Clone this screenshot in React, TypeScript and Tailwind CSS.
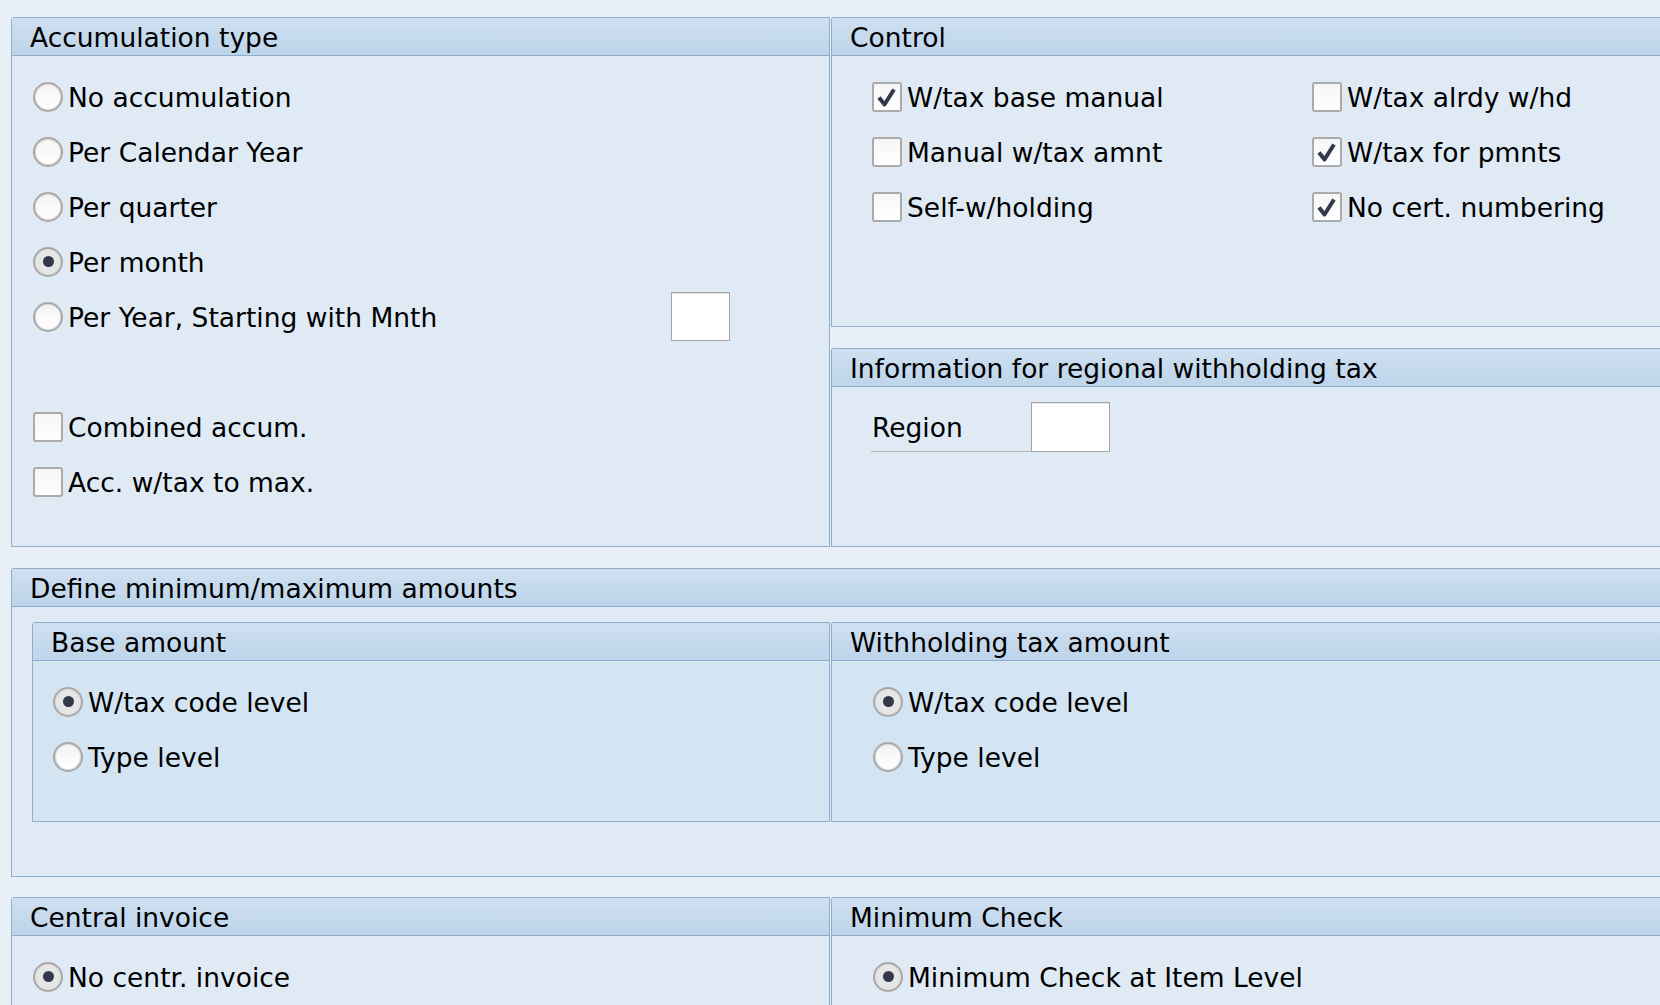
import React from 'react';

type PanelProps = {
	title: string;
	className?: string;
	bodyClassName?: string;
	inner?: boolean;
	children?: React.ReactNode;
};

function Panel({ title, className = '', bodyClassName = '', inner, children }: PanelProps) {
	return (
		<div
			className={`flex flex-col border border-r-0 border-[#8eaccc] rounded-tl-[3px] ${
				inner ? 'bg-[#d3e4f2]' : 'bg-[#dfeaf5]'
			} ${className}`}
		>
			<div className="flex h-[38px] shrink-0 items-center border-b border-[#8eaccc] bg-gradient-to-b from-[#cfe0f1] to-[#bdd4ea] pl-[18px]">
				<span className="mt-[2px]">{title}</span>
			</div>
			<div className={`flex-1 ${bodyClassName}`}>{children}</div>
		</div>
	);
}

function Radio({ checked }: { checked?: boolean }) {
	return (
		<span
			className={`flex h-[30px] w-[30px] shrink-0 items-center justify-center rounded-full border-2 border-[#a9a9a9] shadow-[inset_0_0_0_1px_#dcdcdc] ${
				checked ? 'bg-[#e6e6e6]' : 'bg-gradient-to-b from-[#f4f4f4] to-white'
			}`}
		>
			{checked && <span className="h-[11px] w-[11px] rounded-full bg-[#33374a]" />}
		</span>
	);
}

function Check({ checked }: { checked?: boolean }) {
	return (
		<span className="flex h-[30px] w-[30px] shrink-0 items-center justify-center rounded-[3px] border-2 border-[#ababab] bg-gradient-to-b from-[#f6f6f6] to-white">
			{checked && (
				<svg width="26" height="26" viewBox="0 0 26 26">
					<path
						d="M5 13.5 L10.5 20.5 L20 5.5"
						fill="none"
						stroke="#34384b"
						strokeWidth="4"
						strokeLinejoin="round"
					/>
				</svg>
			)}
		</span>
	);
}

function Row({ children }: { children: React.ReactNode }) {
	return <div className="flex h-[55px] items-center gap-[5px]">{children}</div>;
}

function Label({ children }: { children: React.ReactNode }) {
	return <span className="mt-[3px]">{children}</span>;
}

function Field() {
	return <span className="h-[49px] w-[59px] border border-[#a5a5a5] bg-white shadow-[inset_0_1px_0_#e2e2e2]" />;
}

export default function App() {
	return (
		<div className="h-[1005px] w-[1660px] overflow-hidden bg-[#e9f0f7] pl-[11px] pt-[17px] font-['DejaVu_Sans',sans-serif] text-[26.5px] text-black">
			<div className="flex w-[1720px] flex-col">
				{/* top row */}
				<div className="flex h-[530px] gap-px">
					<Panel title="Accumulation type" className="w-[819px] !border-r" bodyClassName="pl-[21px] pt-[13px]">
						<Row>
							<Radio />
							<Label>No accumulation</Label>
						</Row>
						<Row>
							<Radio />
							<Label>Per Calendar Year</Label>
						</Row>
						<Row>
							<Radio />
							<Label>Per quarter</Label>
						</Row>
						<Row>
							<Radio checked />
							<Label>Per month</Label>
						</Row>
						<div className="flex h-[55px] items-center">
							<div className="flex w-[638px] items-center gap-[5px]">
								<Radio />
								<Label>Per Year, Starting with Mnth</Label>
							</div>
							<Field />
						</div>
						<div className="h-[55px]" />
						<Row>
							<Check />
							<Label>Combined accum.</Label>
						</Row>
						<Row>
							<Check />
							<Label>Acc. w/tax to max.</Label>
						</Row>
					</Panel>

					<div className="flex flex-1 flex-col gap-[21px]">
						<Panel title="Control" className="h-[310px]" bodyClassName="pl-[40px] pt-[13px]">
							<div className="grid grid-cols-[440px_1fr]">
								<Row>
									<Check checked />
									<Label>W/tax base manual</Label>
								</Row>
								<Row>
									<Check />
									<Label>W/tax alrdy w/hd</Label>
								</Row>
								<Row>
									<Check />
									<Label>Manual w/tax amnt</Label>
								</Row>
								<Row>
									<Check checked />
									<Label>W/tax for pmnts</Label>
								</Row>
								<Row>
									<Check />
									<Label>Self-w/holding</Label>
								</Row>
								<Row>
									<Check checked />
									<Label>No cert. numbering</Label>
								</Row>
							</div>
						</Panel>
						<Panel
							title="Information for regional withholding tax"
							className="flex-1"
							bodyClassName="pl-[39px] pt-[15px]"
						>
							<div className="flex items-center">
								<div className="flex h-[50px] w-[160px] items-center border-b border-[#b4b4b4] pl-[1px]">
									<Label>Region</Label>
								</div>
								<span className="h-[50px] w-[79px] border border-[#a5a5a5] bg-white shadow-[inset_0_1px_0_#e2e2e2]" />
							</div>
						</Panel>
					</div>
				</div>

				{/* min / max */}
				<Panel title="Define minimum/maximum amounts" className="mt-[21px] h-[309px]" bodyClassName="pl-[20px] pt-[15px]">
					<div className="flex h-[200px] gap-px">
						<Panel title="Base amount" inner className="w-[798px] !border-r" bodyClassName="pl-[20px] pt-[13px]">
							<Row>
								<Radio checked />
								<Label>W/tax code level</Label>
							</Row>
							<Row>
								<Radio />
								<Label>Type level</Label>
							</Row>
						</Panel>
						<Panel title="Withholding tax amount" inner className="flex-1" bodyClassName="pl-[41px] pt-[13px]">
							<Row>
								<Radio checked />
								<Label>W/tax code level</Label>
							</Row>
							<Row>
								<Radio />
								<Label>Type level</Label>
							</Row>
						</Panel>
					</div>
				</Panel>

				{/* bottom row */}
				<div className="mt-[20px] flex h-[200px] gap-px">
					<Panel title="Central invoice" className="w-[819px] !border-r" bodyClassName="pl-[21px] pt-[13px]">
						<Row>
							<Radio checked />
							<Label>No centr. invoice</Label>
						</Row>
					</Panel>
					<Panel title="Minimum Check" className="flex-1" bodyClassName="pl-[41px] pt-[13px]">
						<Row>
							<Radio checked />
							<Label>Minimum Check at Item Level</Label>
						</Row>
					</Panel>
				</div>
			</div>
		</div>
	);
}
